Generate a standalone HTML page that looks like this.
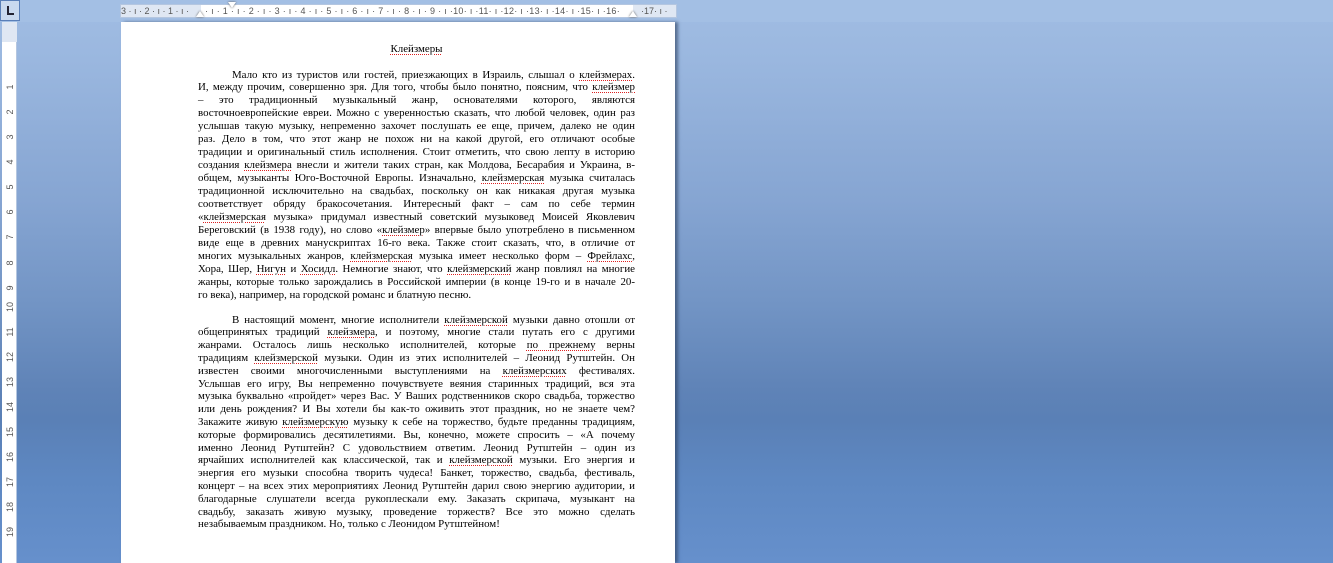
<!DOCTYPE html>
<html><head><meta charset="utf-8"><style>
*{margin:0;padding:0;box-sizing:border-box}
body{width:1333px;height:563px;overflow:hidden;position:relative;background:linear-gradient(180deg,#a1bde3 0px,#9ab7df 60px,#86a5d2 200px,#7395c5 300px,#5f83b7 390px,#5a80b6 420px,#5e88c2 480px,#6690cc 563px);font-family:"Liberation Serif","Noto Serif CJK SC",serif}
.top{position:absolute;left:0;top:0;width:1333px;height:22px;background:#a3bfe4}
.rul{position:absolute;left:120px;top:4px;width:557px;height:14px;background:#dfe7f3;border:1px solid #b4c6e0}
.rulw{position:absolute;left:80px;top:0;width:432px;height:12px;background:#fff}
.rt{position:absolute;top:0;font:9px "Liberation Sans",sans-serif;color:#555;line-height:12px}
.vr{position:absolute;left:2px;top:22px;width:15px;height:541px;background:#fff;border-right:1px solid #b4c6e0}
.vrg{position:absolute;left:0;top:0;width:15px;height:20px;background:#dfe7f3}
.tab{position:absolute;left:0;top:0;width:20px;height:21px;border:1px solid #5a7fb8;background:#c9d9ef}
.vt{position:absolute;left:2px;font:9px "Liberation Sans",sans-serif;color:#555;transform:rotate(-90deg);width:12px;text-align:center}
.page{position:absolute;left:121px;top:22px;width:554px;height:541px;background:#fff;box-shadow:3px 0 3px rgba(40,60,90,.6)}
.l{position:absolute;left:198px;width:437px;height:13px;line-height:13px;font-size:10.9px;color:#000;text-align:justify;text-align-last:justify;white-space:nowrap;overflow:visible}
.n{text-align-last:left}
.i{padding-left:34px}
u{text-decoration:underline dotted #d22;text-decoration-thickness:1px;text-underline-offset:2px}
</style></head><body>
<div class="top"></div>
<div class="tab"><div style="position:absolute;left:6px;top:5px;width:7px;height:9px;border-left:2px solid #223;border-bottom:2px solid #223"></div></div>
<div class="rul"><div class="rulw"></div>
<span class="rt" style="left:0">3 · ı · 2 · ı · 1 · ı ·</span>
<span class="rt" style="left:84px;letter-spacing:.3px">· ı · 1 · ı · 2 · ı · 3 · ı · 4 · ı · 5 · ı · 6 · ı · 7 · ı · 8 · ı · 9 · ı ·10· ı ·11· ı ·12· ı ·13· ı ·14· ı ·15· ı ·16·</span>
<span class="rt" style="left:520px">·17· ı ·</span>
</div>
<div style="position:absolute;left:196px;top:11px;width:0;height:0;border-left:4px solid transparent;border-right:4px solid transparent;border-bottom:6px solid #fff;filter:drop-shadow(0 0 1px #555)"></div>
<div style="position:absolute;left:228px;top:2px;width:0;height:0;border-left:4px solid transparent;border-right:4px solid transparent;border-top:6px solid #fff;filter:drop-shadow(0 0 1px #555)"></div>
<div style="position:absolute;left:629px;top:11px;width:0;height:0;border-left:4px solid transparent;border-right:4px solid transparent;border-bottom:6px solid #fff;filter:drop-shadow(0 0 1px #555)"></div>
<div class="vr"><div class="vrg"></div>
<div class="vt" style="top:60px">1</div><div class="vt" style="top:85px">2</div><div class="vt" style="top:110px">3</div><div class="vt" style="top:135px">4</div><div class="vt" style="top:160px">5</div><div class="vt" style="top:185px">6</div><div class="vt" style="top:210px">7</div><div class="vt" style="top:236px">8</div><div class="vt" style="top:261px">9</div><div class="vt" style="top:280px">10</div><div class="vt" style="top:305px">11</div><div class="vt" style="top:330px">12</div><div class="vt" style="top:355px">13</div><div class="vt" style="top:380px">14</div><div class="vt" style="top:405px">15</div><div class="vt" style="top:430px">16</div><div class="vt" style="top:455px">17</div><div class="vt" style="top:480px">18</div><div class="vt" style="top:505px">19</div>
</div>
<div class="page"></div>
<div class="l n" style="top:43px;text-align:center;text-align-last:center"><u>Клейзмеры</u></div>
<div class="l i" style="top:68.5px">Мало кто из туристов или гостей, приезжающих в Израиль, слышал о <u>клейзмерах</u>.</div>
<div class="l" style="top:81.4px">И, между прочим, совершенно зря. Для того, чтобы было понятно, поясним, что <u>клейзмер</u></div>
<div class="l" style="top:94.4px">– это традиционный музыкальный жанр, основателями которого, являются</div>
<div class="l" style="top:107.3px">восточноевропейские евреи. Можно с уверенностью сказать, что любой человек, один раз</div>
<div class="l" style="top:120.3px">услышав такую музыку, непременно захочет послушать ее еще, причем, далеко не один</div>
<div class="l" style="top:133.2px">раз. Дело в том, что этот жанр не похож ни на какой другой, его отличают особые</div>
<div class="l" style="top:146.1px">традиции и оригинальный стиль исполнения. Стоит отметить, что свою лепту в историю</div>
<div class="l" style="top:159.1px">создания <u>клейзмера</u> внесли и жители таких стран, как Молдова, Бесарабия и Украина, в-</div>
<div class="l" style="top:172px">общем, музыканты Юго-Восточной Европы. Изначально, <u>клейзмерская</u> музыка считалась</div>
<div class="l" style="top:185px">традиционной исключительно на свадьбах, поскольку он как никакая другая музыка</div>
<div class="l" style="top:197.9px">соответствует обряду бракосочетания. Интересный факт – сам по себе термин</div>
<div class="l" style="top:210.8px">«<u>клейзмерская</u> музыка» придумал известный советский музыковед Моисей Яковлевич</div>
<div class="l" style="top:223.8px">Береговский (в 1938 году), но слово «<u>клейзмер</u>» впервые было употреблено в письменном</div>
<div class="l" style="top:236.7px">виде еще в древних манускриптах 16-го века. Также стоит сказать, что, в отличие от</div>
<div class="l" style="top:249.7px">многих музыкальных жанров, <u>клейзмерская</u> музыка имеет несколько форм – <u>Фрейлахс</u>,</div>
<div class="l" style="top:262.6px">Хора, Шер, <u>Нигун</u> и <u>Хосидл</u>. Немногие знают, что <u>клейзмерский</u> жанр повлиял на многие</div>
<div class="l" style="top:275.5px">жанры, которые только зарождались в Российской империи (в конце 19-го и в начале 20-</div>
<div class="l n" style="top:288.5px">го века), например, на городской романс и блатную песню.</div>
<div class="l i" style="top:313.5px">В настоящий момент, многие исполнители <u>клейзмерской</u> музыки давно отошли от</div>
<div class="l" style="top:326.3px">общепринятых традиций <u>клейзмера</u>, и поэтому, многие стали путать его с другими</div>
<div class="l" style="top:339.1px">жанрами. Осталось лишь несколько исполнителей, которые <u>по прежнему</u> верны</div>
<div class="l" style="top:351.9px">традициям <u>клейзмерской</u> музыки. Один из этих исполнителей – Леонид Рутштейн. Он</div>
<div class="l" style="top:364.7px">известен своими многочисленными выступлениями на <u>клейзмерских</u> фестивалях.</div>
<div class="l" style="top:377.5px">Услышав его игру, Вы непременно почувствуете веяния старинных традиций, вся эта</div>
<div class="l" style="top:390.3px">музыка буквально «пройдет» через Вас. У Ваших родственников скоро свадьба, торжество</div>
<div class="l" style="top:403.1px">или день рождения? И Вы хотели бы как-то оживить этот праздник, но не знаете чем?</div>
<div class="l" style="top:415.9px">Закажите живую <u>клейзмерскую</u> музыку к себе на торжество, будьте преданны традициям,</div>
<div class="l" style="top:428.7px">которые формировались десятилетиями. Вы, конечно, можете спросить – «А почему</div>
<div class="l" style="top:441.5px">именно Леонид Рутштейн? С удовольствием ответим. Леонид Рутштейн – один из</div>
<div class="l" style="top:454.3px">ярчайших исполнителей как классической, так и <u>клейзмерской</u> музыки. Его энергия и</div>
<div class="l" style="top:467.1px">энергия его музыки способна творить чудеса! Банкет, торжество, свадьба, фестиваль,</div>
<div class="l" style="top:479.9px">концерт – на всех этих мероприятиях Леонид Рутштейн дарил свою энергию аудитории, и</div>
<div class="l" style="top:492.7px">благодарные слушатели всегда рукоплескали ему. Заказать скрипача, музыкант на</div>
<div class="l" style="top:505.5px">свадьбу, заказать живую музыку, проведение торжеств? Все это можно сделать</div>
<div class="l n" style="top:518.3px">незабываемым праздником. Но, только с Леонидом Рутштейном!</div>
</body></html>
